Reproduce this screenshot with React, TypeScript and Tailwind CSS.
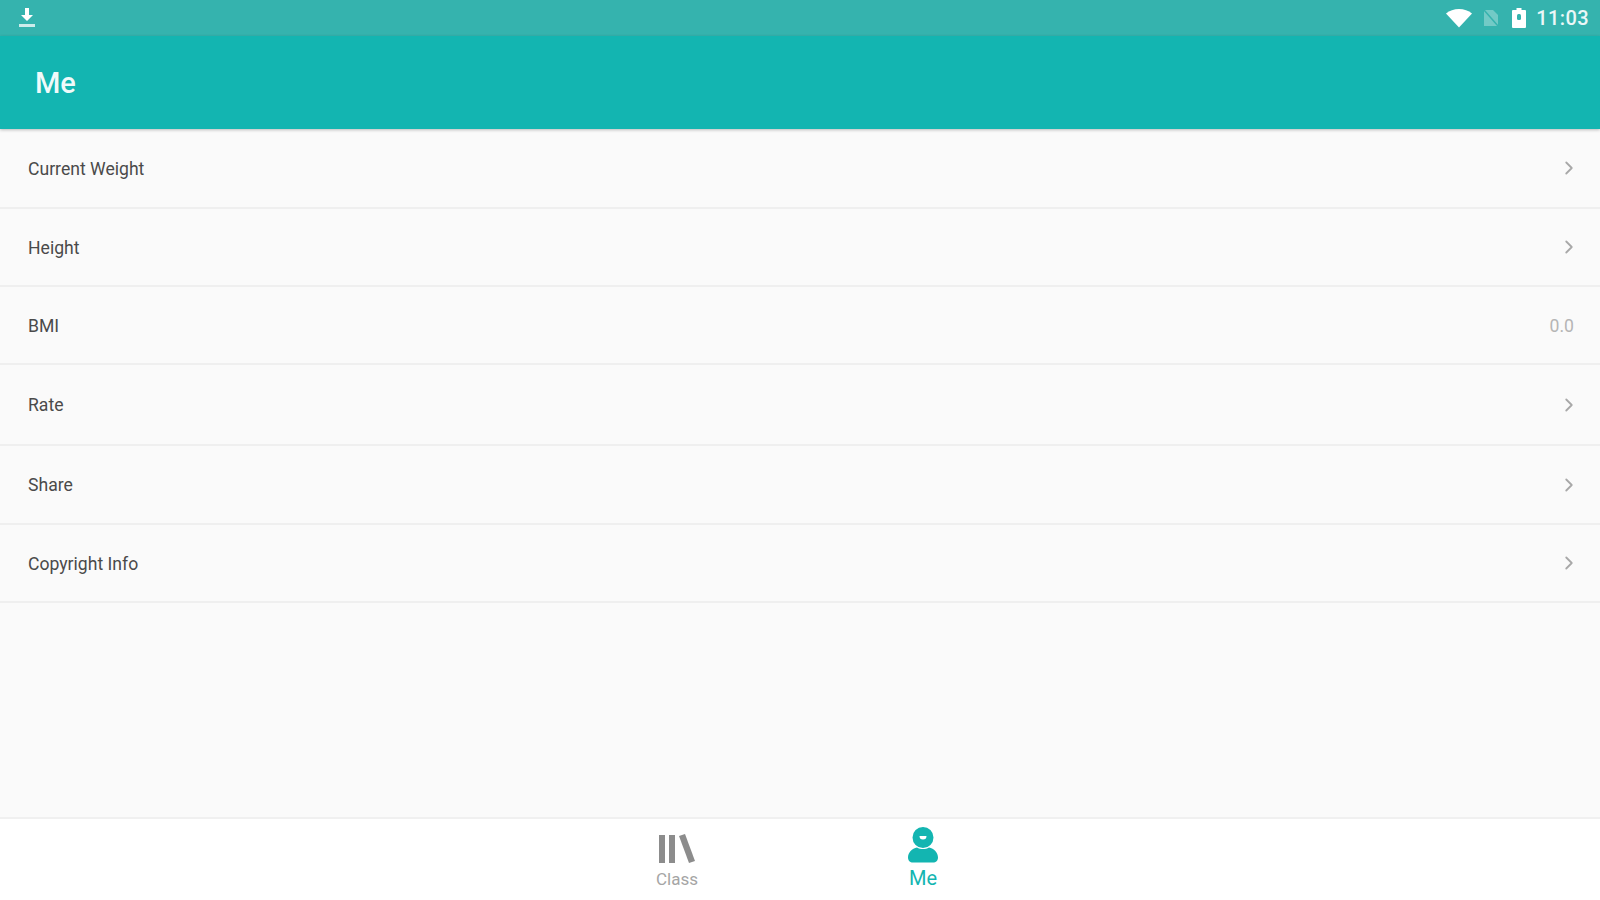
import { ChevronRight } from "lucide-react";

const rows = [
  { label: "Current Weight", height: "h-[80px]" },
  { label: "Height", height: "h-[78px]" },
  { label: "BMI", height: "h-[78px]", value: "0.0" },
  { label: "Rate", height: "h-[81px]" },
  { label: "Share", height: "h-[79px]" },
  { label: "Copyright Info", height: "h-[78px]" },
];

function DownloadIcon() {
  return (
    <svg width="18" height="22" viewBox="0 0 18 22" fill="#fff">
      <path d="M7 1h4v7h4l-6 6-6-6h4z" />
      <rect x="1" y="17" width="16" height="3" opacity="0.75" />
    </svg>
  );
}

function StatusIcons() {
  return (
    <div className="flex items-center">
      <svg width="28" height="20" viewBox="0 0 28 20" fill="#fff" className="mr-[10px]">
        <path d="M1 5.500C4.500 2.500 9 1 14 1s9.500 1.500 13 4.500L14 19.500z" />
      </svg>
      <svg width="16" height="18" viewBox="0 0 16 18" fill="#fff" opacity="0.3" className="mr-[13px]">
        <path d="M1 1h9l5 5v11H1z" />
        <path d="M1 1l14 16" stroke="#35b3ae" strokeWidth="1.500" />
      </svg>
      <svg width="14" height="20" viewBox="0 0 14 20" fill="#fff" className="mr-[10px]">
        <path d="M4.500 0h5v2H13a1 1 0 0 1 1 1v16a1 1 0 0 1-1 1H1a1 1 0 0 1-1-1V3a1 1 0 0 1 1-1h3.500z" />
        <rect x="5" y="6" width="4" height="6" rx="1.500" fill="#35b3ae" />
      </svg>
      <span className="text-[20px] font-medium tracking-[0.4px] text-white/90">11:03</span>
    </div>
  );
}

function BooksIcon() {
  return (
    <svg width="38" height="32" viewBox="0 0 38 32" fill="#8c8c8c">
      <rect x="1" y="2" width="6" height="28" />
      <rect x="11" y="2" width="6" height="28" />
      <path d="M21 3l6-2 10 27-6 2z" />
    </svg>
  );
}

function PersonIcon() {
  return (
    <svg width="30" height="36" viewBox="0 0 30 36" fill="#13b5b1">
      <path
        fillRule="evenodd"
        d="M15 0a10.500 10.500 0 1 1 0 21a10.500 10.500 0 0 1 0-21zM11.500 9a3.500 3.500 0 0 0 7 0z"
      />
      <path d="M9 20.500c3.500 2 8.500 2 12 0 5 1 9 5 9 10 0 3-2 5-5 5H5c-3 0-5-2-5-5 0-5 4-9 9-10z" />
    </svg>
  );
}

export default function App() {
  return (
    <div className="flex h-[900px] w-[1600px] flex-col overflow-hidden bg-[#fafafa] font-['Roboto',sans-serif]">
      <div className="flex h-[36px] items-center justify-between bg-[#35b3ae] pl-[18px] pr-[11px]">
        <DownloadIcon />
        <StatusIcons />
      </div>

      <header className="z-10 flex h-[93px] items-center bg-[#13b5b1] pl-[35px] pt-[2px] shadow-[0_1px_3px_rgba(0,0,0,0.25)]">
        <h1 className="text-[29px] font-medium text-white/95">Me</h1>
      </header>

      <main className="flex-1">
        {rows.map((row) => (
          <div
            key={row.label}
            className={`flex items-center justify-between border-b-2 border-[#efefef] pl-[28px] pr-[20px] ${row.height}`}
          >
            <span className="pt-[2px] text-[17.600px] text-[#4a4a4a]">{row.label}</span>
            {row.value ? (
              <span className="pr-[6px] pt-[2px] text-[17.600px] text-[#b5b5b5]">{row.value}</span>
            ) : (
              <ChevronRight size={22} strokeWidth={2} className="text-[#a8a8a8]" />
            )}
          </div>
        ))}
      </main>

      <nav className="flex h-[83px] justify-center border-t-2 border-[#f0f0f0] bg-white">
        <div className="flex w-[246px] flex-col items-center pt-[14px]">
          <BooksIcon />
          <span className="mt-[4px] text-[17px] leading-[20px] text-[#a5a5a5]">Class</span>
        </div>
        <div className="flex w-[246px] flex-col items-center pt-[8px]">
          <PersonIcon />
          <span className="mt-[4px] text-[20px] leading-[22px] text-[#13b5b1]">Me</span>
        </div>
      </nav>
    </div>
  );
}
